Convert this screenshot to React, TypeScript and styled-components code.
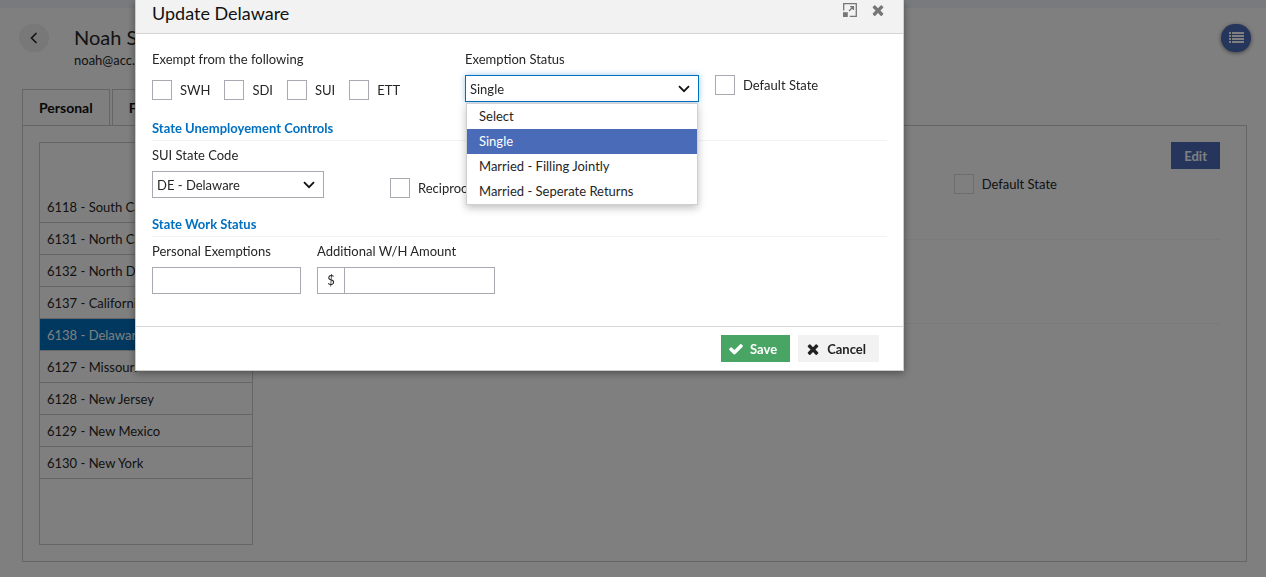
import React from "react";
import styled, { createGlobalStyle } from "styled-components";

const line = "#a9a9b2";

const GlobalStyle = createGlobalStyle`
  * { box-sizing: border-box; }
  html, body, #root { height: 100%; }
  body {
    margin: 0;
    background: #fff;
    overflow: hidden;
    color: #262626;
    font: 13px/18px Lato, "Noto Sans", sans-serif;
  }
  button, input, select { font: inherit; color: inherit; }
`;

const Page = styled.div`
  min-height: 100%;
  border-top: 8px solid #f2f4fd;
`;

const PageHeader = styled.header`
  display: flex;
  align-items: flex-start;
  padding: 16px 15px 0 19px;
  height: 81px;
`;

const BackButton = styled.button`
  display: grid;
  place-items: center;
  width: 30px;
  height: 28px;
  padding: 0;
  border: 0;
  border-radius: 14px;
  background: #f0f0f0;
  color: #222;
`;

const Person = styled.div`
  flex: 1;
  margin-left: 25px;
  white-space: nowrap;
`;

const PersonName = styled.h1`
  margin: 0;
  font-size: 20px;
  line-height: 27px;
  font-weight: 400;
`;

const PersonMail = styled.div`
  line-height: 18px;
`;

const MenuButton = styled(BackButton)`
  background: #4a6bb8;
  color: #fff;
  box-shadow: 0 1px 4px rgba(0, 0, 0, 0.5);
`;

const Tabs = styled.nav`
  display: flex;
  gap: 2px;
  margin: 0 22px;
`;

const Tab = styled.button`
  height: 36px;
  padding: 0 16px;
  border: 1px solid #ccc;
  border-bottom: 0;
  background: #fff;
  font-size: 14px;
  font-weight: 700;
  color: #111;
`;

const Panel = styled.main`
  display: flex;
  gap: 16px;
  margin: 0 19px 16px 22px;
  padding: 16px;
  border: 1px solid #ccc;
`;

const StateList = styled.ul`
  flex: none;
  width: 214px;
  min-height: 403px;
  margin: 0;
  padding: 48px 0 0;
  list-style: none;
  border: 1px solid #ccc;
`;

const StateItem = styled.li<{ $active?: boolean }>`
  height: 32px;
  padding: 0 7px;
  line-height: 32px;
  border-bottom: 1px solid #ccc;
  background: ${(p) => (p.$active ? "#0070c0" : "transparent")};
  color: ${(p) => (p.$active ? "#fff" : "inherit")};
`;

const Detail = styled.section`
  flex: 1;
  padding-right: 10px;
`;

const DetailBar = styled.div`
  display: flex;
  justify-content: flex-end;
`;

const EditButton = styled.button`
  height: 27px;
  padding: 0 13px;
  border: 0;
  background: #4a6bb8;
  color: #fff;
  font-weight: 700;
`;

const DetailRow = styled.div<{ $height: number }>`
  display: flex;
  align-items: flex-start;
  height: ${(p) => p.$height}px;
  padding: 5px 0 0 72%;
  border-bottom: 1px solid #f4f4f4;
`;

const Overlay = styled.div`
  position: fixed;
  inset: 0;
  display: flex;
  align-items: flex-start;
  padding: 0 362px 0 135px;
  background: rgba(0, 0, 0, 0.5);
`;

const Dialog = styled.form`
  flex: 1;
  border: 1px solid #ccc;
  border-top: 0;
  background: #fff;
  box-shadow: 0 2px 8px rgba(0, 0, 0, 0.4);
`;

const DialogHeader = styled.header`
  display: flex;
  align-items: flex-start;
  gap: 13px;
  height: 34px;
  padding: 1px 17px 0 16px;
  background: #f2f2f2;
  border-bottom: 1px solid #d4d4d4;
`;

const DialogTitle = styled.h2`
  flex: 1;
  margin: 0;
  font-size: 18px;
  line-height: 24px;
  font-weight: 400;
  color: #111;
`;

const IconButton = styled.button`
  display: grid;
  place-items: center;
  height: 18px;
  padding: 0;
  border: 0;
  background: none;
  color: #777;
`;

const DialogBody = styled.div`
  display: flex;
  flex-direction: column;
  gap: 16px;
  padding: 16px 16px 32px;
`;

const TopRow = styled.div`
  display: grid;
  grid-template-columns: 297px 234px auto;
  gap: 16px;
  justify-content: start;
`;

const Group = styled.fieldset`
  min-width: 0;
  margin: 0;
  padding: 0;
  border: 0;
`;

const Legend = styled.legend`
  padding: 0;
  margin-bottom: 12px;
`;

const CheckRow = styled.div`
  display: flex;
  gap: 14px;
`;

const CheckLabel = styled.label<{ $faint?: boolean }>`
  display: flex;
  align-items: center;
  gap: 8px;
  height: 20px;
  white-space: nowrap;

  input {
    appearance: none;
    width: 20px;
    height: 20px;
    margin: 0;
    border: 1px solid ${(p) => (p.$faint ? "#dcdcdc" : line)};
    background: ${(p) => (p.$faint ? "transparent" : "#fff")};
  }
`;

const Below = styled.div<{ $top: number }>`
  padding-top: ${(p) => p.$top}px;
`;

const Field = styled.div<{ $width: number }>`
  position: relative;
  display: flex;
  flex-direction: column;
  gap: 7px;
  width: ${(p) => p.$width}px;
`;

const SelectBox = styled.div`
  display: grid;
  align-items: center;

  select, svg { grid-area: 1 / 1; }
  svg { justify-self: end; margin-right: 9px; pointer-events: none; color: #111; }
`;

const Select = styled.select<{ $focused?: boolean }>`
  appearance: none;
  height: 27px;
  padding: 0 4px;
  border: 1px solid ${(p) => (p.$focused ? "#0070c0" : line)};
  border-radius: 0;
  background: #fff;
  box-shadow: ${(p) => (p.$focused ? "0 0 6px rgba(0, 112, 192, 0.4)" : "none")};
`;

const Options = styled.ul`
  position: absolute;
  top: 100%;
  left: 1px;
  right: 1px;
  z-index: 2;
  margin: 1px 0 0;
  padding: 0;
  list-style: none;
  background: #fff;
  border: 1px solid #d0d0d4;
  box-shadow: 0 3px 8px rgba(0, 0, 0, 0.25);
`;

const Option = styled.li<{ $active?: boolean }>`
  padding: 0 12px;
  line-height: 25px;
  background: ${(p) => (p.$active ? "#4a6bb8" : "#fff")};
  color: ${(p) => (p.$active ? "#fff" : "inherit")};
`;

const Section = styled.section`
  display: flex;
  flex-direction: column;
  gap: 5px;
`;

const SectionTitle = styled.h3`
  margin: 0;
  padding-bottom: 2px;
  font-size: 13px;
  line-height: 20px;
  font-weight: 700;
  color: #0070c0;
  border-bottom: 1px solid #f2f2f2;
`;

const FieldRow = styled.div<{ $gap: number }>`
  display: flex;
  gap: ${(p) => p.$gap}px;
`;

const TextInput = styled.input`
  min-width: 0;
  width: 100%;
  height: 27px;
  padding: 0 6px;
  border: 1px solid ${line};
  border-radius: 0;
  background: #fff;
`;

const MoneyBox = styled.div`
  display: flex;

  span {
    flex: none;
    width: 27px;
    line-height: 25px;
    text-align: center;
    border: 1px solid ${line};
    border-right: 0;
  }
`;

const DialogFooter = styled.footer`
  display: flex;
  justify-content: flex-end;
  gap: 8px;
  padding: 8px 24px;
  border-top: 1px solid #d8d8d8;
`;

const ActionButton = styled.button<{ $primary?: boolean }>`
  display: flex;
  align-items: center;
  gap: 6px;
  height: 27px;
  padding: 0 13px 0 7px;
  border: 0;
  font-weight: 700;
  background: ${(p) => (p.$primary ? "#49a564" : "#f2f2f2")};
  color: ${(p) => (p.$primary ? "#fff" : "#222")};
`;

const Chevron = () => (
  <svg width="12" height="8" viewBox="0 0 12 8" fill="none" stroke="currentColor" strokeWidth="1.8">
    <path d="M1 1.2 6 6.2 11 1.2" />
  </svg>
);

const CheckIcon = () => (
  <svg width="16" height="16" viewBox="0 0 1792 1792" fill="currentColor">
    <path d="M1671 566q0 40-28 68l-724 724-136 136q-28 28-68 28t-68-28l-136-136-362-362q-28-28-28-68t28-68l136-136q28-28 68-28t68 28l294 295 656-657q28-28 68-28t68 28l136 136q28 28 28 68z" />
  </svg>
);

const TimesIcon = () => (
  <svg width="16" height="16" viewBox="0 0 1792 1792" fill="currentColor">
    <path d="M1490 1322q0 40-28 68l-136 136q-28 28-68 28t-68-28l-294-294-294 294q-28 28-68 28t-68-28l-136-136q-28-28-28-68t28-68l294-294-294-294q-28-28-28-68t28-68l136-136q28-28 68-28t68 28l294 294 294-294q28-28 68-28t68 28l136 136q28 28 28 68t-28 68l-294 294 294 294q28 28 28 68z" />
  </svg>
);

const ExpandIcon = () => (
  <svg width="14" height="14" viewBox="0 0 14 14" fill="none" stroke="currentColor" strokeWidth="1.3">
    <path d="M.7 7.5V.7h12.6v12.6H6.8M6 8l4.2-4.2M7 3.7h3.4v3.4" />
    <path d="M0 9.2h4.8V14H0z" fill="currentColor" stroke="none" />
  </svg>
);

const ListIcon = () => (
  <svg width="15" height="12" viewBox="0 0 15 12" fill="currentColor">
    {[0, 3, 6, 9].map((y) => (
      <path key={y} d={`M0 ${y}h2v2H0zM3 ${y}h12v2H3z`} />
    ))}
  </svg>
);

const states = [
  "6118 - South Carolina",
  "6131 - North Carolina",
  "6132 - North Dakota",
  "6137 - California",
  "6138 - Delaware",
  "6127 - Missouri",
  "6128 - New Jersey",
  "6129 - New Mexico",
  "6130 - New York",
];

const statuses = ["Select", "Single", "Married - Filling Jointly", "Married - Seperate Returns"];

const Check = ({ label, faint }: { label: string; faint?: boolean }) => (
  <CheckLabel $faint={faint}>
    <input type="checkbox" />
    {label}
  </CheckLabel>
);

export default function App() {
  return (
    <>
      <GlobalStyle />
      <Page>
        <PageHeader>
          <BackButton aria-label="Back">
            <svg width="8" height="12" viewBox="0 0 8 12" fill="none" stroke="currentColor" strokeWidth="1.6">
              <path d="M6.5 1 1.5 6l5 5" />
            </svg>
          </BackButton>
          <Person>
            <PersonName>Noah Stone</PersonName>
            <PersonMail>noah@acc.co</PersonMail>
          </Person>
          <MenuButton aria-label="Menu">
            <ListIcon />
          </MenuButton>
        </PageHeader>
        <Tabs>
          <Tab>Personal</Tab>
          <Tab>Federal</Tab>
        </Tabs>
        <Panel>
          <StateList>
            {states.map((s) => (
              <StateItem key={s} $active={s.endsWith("Delaware")}>{s}</StateItem>
            ))}
          </StateList>
          <Detail>
            <DetailBar>
              <EditButton>Edit</EditButton>
            </DetailBar>
            <DetailRow $height={71}>
              <Check label="Default State" faint />
            </DetailRow>
            <DetailRow $height={84} />
          </Detail>
        </Panel>
      </Page>
      <Overlay>
        <Dialog role="dialog" aria-labelledby="dialog-title">
          <DialogHeader>
            <DialogTitle id="dialog-title">Update Delaware</DialogTitle>
            <IconButton type="button" aria-label="Expand"><ExpandIcon /></IconButton>
            <IconButton type="button" aria-label="Close"><TimesIcon /></IconButton>
          </DialogHeader>
          <DialogBody>
            <TopRow>
              <Group>
                <Legend>Exempt from the following</Legend>
                <CheckRow>
                  {["SWH", "SDI", "SUI", "ETT"].map((l) => <Check key={l} label={l} />)}
                </CheckRow>
              </Group>
              <Field $width={234}>
                <label htmlFor="status">Exemption Status</label>
                <SelectBox>
                  <Select id="status" $focused defaultValue="Single">
                    {statuses.map((s) => <option key={s}>{s}</option>)}
                  </Select>
                  <Chevron />
                </SelectBox>
                <Options role="listbox" aria-label="Exemption Status">
                  {statuses.map((s) => (
                    <Option key={s} role="option" aria-selected={s === "Single"} $active={s === "Single"}>{s}</Option>
                  ))}
                </Options>
              </Field>
              <Below $top={25}><Check label="Default State" /></Below>
            </TopRow>
            <Section>
              <SectionTitle>State Unemployement Controls</SectionTitle>
              <FieldRow $gap={66}>
                <Field $width={172}>
                  <label htmlFor="sui">SUI State Code</label>
                  <SelectBox>
                    <Select id="sui"><option>DE - Delaware</option></Select>
                    <Chevron />
                  </SelectBox>
                </Field>
                <Below $top={32}><Check label="Reciprocity" /></Below>
              </FieldRow>
            </Section>
            <Section>
              <SectionTitle>State Work Status</SectionTitle>
              <FieldRow $gap={16}>
                <Field $width={149}>
                  <label htmlFor="exemptions">Personal Exemptions</label>
                  <TextInput id="exemptions" />
                </Field>
                <Field $width={178}>
                  <label htmlFor="amount">Additional W/H Amount</label>
                  <MoneyBox>
                    <span>$</span>
                    <TextInput id="amount" />
                  </MoneyBox>
                </Field>
              </FieldRow>
            </Section>
          </DialogBody>
          <DialogFooter>
            <ActionButton type="button" $primary><CheckIcon />Save</ActionButton>
            <ActionButton type="button"><TimesIcon />Cancel</ActionButton>
          </DialogFooter>
        </Dialog>
      </Overlay>
    </>
  );
}
